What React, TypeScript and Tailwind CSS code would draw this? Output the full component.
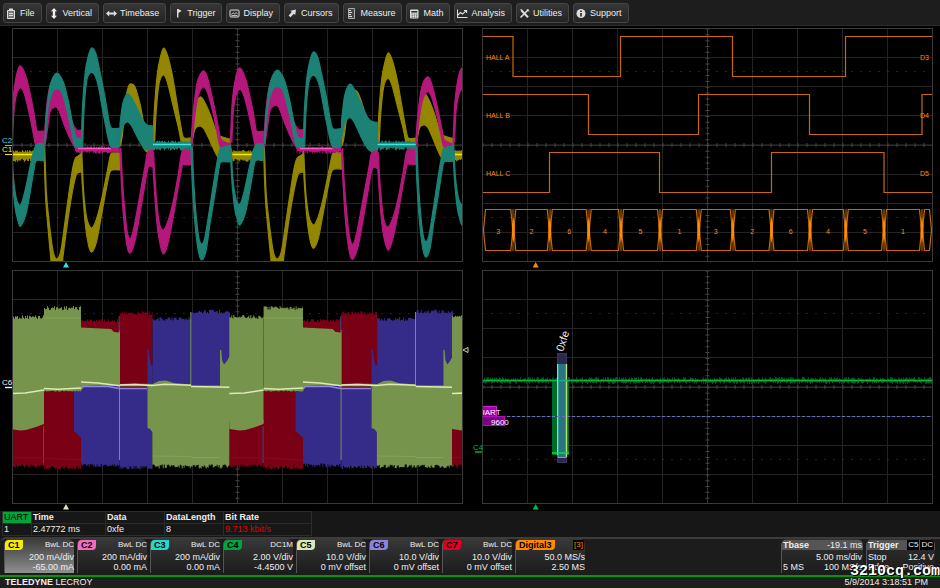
import React from "react";

type Point = [number, number];

type Pulse = {
  color: string;
  outer: Point[];
  inner: Point[];
  // amplitude of the same pulse one motor period later
  next: number;
};

const YELLOW = "#938600";
const MAGENTA = "#b4187b";
const TEAL = "#1c8276";
const GREEN = "#76944b";
const RED = "#7a0016";
const BLUE = "#352c8a";

// commutation edges for every electrical period on screen
const EDGES = [
  [10, 44, 81, 119.7, 152.7, 191, 230.7],
  [229.3, 263.6, 303, 341.3, 377.3, 415.7, 453.7],
  [452, 486, 523, 562, 595, 633, 673],
];

const warp = (x: number, period: number) => {
  const from = EDGES[0];
  const to = EDGES[period];
  let i = 0;
  while (i < from.length - 2 && x > from[i + 1]) i++;
  return to[i] + ((x - from[i]) / (from[i + 1] - from[i])) * (to[i + 1] - to[i]);
};

const curve = (pts: Point[]) => {
  let d = "";
  for (let i = 0; i < pts.length - 1; i++) {
    const a = pts[Math.max(i - 1, 0)];
    const b = pts[i];
    const c = pts[i + 1];
    const e = pts[Math.min(i + 2, pts.length - 1)];
    d +=
      `C${b[0] + (c[0] - a[0]) / 7} ${b[1] + (c[1] - a[1]) / 7} ` +
      `${c[0] - (e[0] - b[0]) / 7} ${c[1] - (e[1] - b[1]) / 7} ${c[0]} ${c[1]}`;
  }
  return d;
};

const band = (pulse: Pulse, period: number) => {
  const k = period === 0 ? 1 : pulse.next;
  const move = ([x, y]: Point): Point => [warp(x, period), 145 + (y - 145) * k];
  const outer = pulse.outer.map(move);
  const inner = pulse.inner.map(move).reverse();
  return `M${outer[0].join(" ")}${curve(outer)}L${inner[0].join(" ")}${curve(inner)}Z`;
};

const noise = (x: number, seed: number) => {
  const v = Math.sin(x * 12.9898 + seed * 78.233) * 43758.5453;
  return v - Math.floor(v);
};

// block with a ragged edge on top and / or bottom
const ragged = (x0: number, x1: number, top: number, bottom: number, up: number, down: number) => {
  let d = `M${x0} ${top}`;
  for (let x = x0; x < x1; x++) {
    const y = top + (noise(x, 1) - 0.5) * up;
    d += `L${x} ${y}L${Math.min(x + 1, x1)} ${y}`;
  }
  for (let x = x1; x > x0; x--) {
    const y = bottom + (noise(x, 2) - 0.5) * down;
    d += `L${x} ${y}L${Math.max(x - 1, x0)} ${y}`;
  }
  return d + "Z";
};

const PULSES: Pulse[] = [
  {
    color: YELLOW,
    next: 1,
    outer: [[44, 144], [44.7, 174], [46, 204], [48.3, 231], [50.7, 257], [52, 264], [61.5, 264], [63.3, 254], [68.3, 217], [73.3, 187], [76.7, 174], [81, 172]],
    inner: [[44.6, 144], [46.3, 191], [48.6, 217], [51.9, 244], [54, 255], [56.5, 259], [59.3, 256], [61.7, 246], [66.7, 209], [71.7, 174], [75, 159], [81, 154]],
  },
  {
    color: YELLOW,
    next: 0.965,
    outer: [[81, 156], [82.3, 184], [85, 221], [88.3, 244], [91.7, 252], [96.7, 241], [101.7, 214], [106.7, 187], [110.7, 171], [119.7, 170]],
    inner: [[81.6, 147], [83.6, 191], [86.9, 219], [91.7, 228], [96.5, 219], [101.7, 199], [106.7, 174], [110, 157], [112, 153], [119.7, 153]],
  },
  {
    color: YELLOW,
    next: 0.9,
    outer: [[120, 134], [123.3, 111], [128.3, 87], [131.7, 84], [135, 87], [140, 104], [143.3, 121], [147, 137], [152.7, 141]],
    inner: [[120.3, 146], [122, 138], [125, 115], [131, 110], [137, 124], [142, 144], [147, 152], [152.7, 152]],
  },
  {
    color: YELLOW,
    next: 0.95,
    outer: [[153, 144], [154.3, 111], [157.3, 74], [160.7, 56], [163.7, 48], [167.7, 56], [172.7, 77], [178.3, 111], [182.3, 134], [184.3, 138], [191, 138]],
    inner: [[154.5, 146], [156, 114], [159, 84], [163.3, 75], [167.3, 82], [172.7, 104], [178.3, 127], [182.7, 146], [191, 146]],
  },
  {
    color: YELLOW,
    next: 1.06,
    outer: [[191.7, 137], [195, 106], [200, 97], [204, 101], [210, 114], [216, 131], [220, 136], [230, 139]],
    inner: [[191.7, 144], [195, 129], [200, 126], [204, 129], [210, 141], [215, 152], [219.3, 158], [220.7, 147], [230, 146]],
  },
  {
    color: MAGENTA,
    next: 0.975,
    outer: [[11, 142], [13, 100], [16.7, 74], [20.7, 66], [26.7, 79], [33.3, 109], [36, 126], [37.3, 131], [44, 131]],
    inner: [[12.5, 142], [14, 111], [16.7, 94], [20.7, 88], [25, 96], [30, 117], [34.3, 139], [36, 145], [44, 145]],
  },
  {
    color: MAGENTA,
    next: 1.04,
    outer: [[44, 144], [46.2, 111], [49.5, 88], [54, 79], [60, 84], [66.7, 99], [71.7, 121], [76.7, 130], [81, 130]],
    inner: [[44.5, 148], [47.3, 131], [50, 112], [54.3, 107], [58.3, 109], [65, 127], [71.7, 142], [76.7, 150], [81, 150]],
  },
  {
    color: MAGENTA,
    next: 1.06,
    outer: [[120, 151], [121.3, 181], [123.3, 214], [126.7, 244], [130, 253], [135, 241], [140, 214], [145, 184], [148.3, 167], [152.7, 167]],
    inner: [[120.9, 148], [122.5, 181], [124.9, 211], [127.3, 232], [130.3, 239], [134, 227], [140, 194], [145, 166], [147.7, 152], [152.7, 150]],
  },
  {
    color: MAGENTA,
    next: 0.965,
    outer: [[152.7, 161], [154, 184], [156.7, 221], [160, 244], [163.7, 254], [168.3, 242], [173.3, 217], [178.3, 187], [182.3, 166], [185, 165], [191, 165]],
    inner: [[153.5, 152], [155.9, 191], [159, 221], [163.3, 230], [168.3, 220], [173.3, 201], [178.3, 174], [182.3, 151], [191, 146]],
  },
  {
    color: MAGENTA,
    next: 0.92,
    outer: [[191, 144], [193.3, 111], [197.3, 82], [203, 71], [207.3, 77], [213.3, 102], [218.3, 127], [220.7, 139], [225, 142], [230, 144]],
    inner: [[192, 144], [195, 114], [198.3, 96], [203, 87], [207.3, 92], [213.3, 114], [218.3, 139], [220.7, 147], [230, 147]],
  },
  {
    color: TEAL,
    next: 0.985,
    outer: [[11, 147], [12.3, 178], [15, 207], [18, 221], [20.7, 226], [26.7, 211], [33.3, 174], [36, 161], [44, 161]],
    inner: [[12, 150], [13.5, 178], [16.7, 200], [20.7, 205], [25, 191], [30, 167], [34.3, 149], [37.3, 144], [44, 144]],
  },
  {
    color: TEAL,
    next: 1.04,
    outer: [[44.7, 141], [46.7, 111], [50.5, 84], [56.7, 73], [63.3, 82], [68.3, 101], [72.7, 124], [76, 137], [81, 139]],
    inner: [[45, 144], [48, 108], [52, 93], [56.7, 89], [61.7, 92], [66.7, 109], [70.7, 127], [74, 144], [76, 147], [81, 147]],
  },
  {
    color: TEAL,
    next: 0.96,
    outer: [[81.3, 147], [82.3, 111], [85, 74], [88.3, 56], [91.7, 48], [96, 54], [100, 72], [105, 97], [108.3, 117], [111.3, 128], [119.7, 128]],
    inner: [[82.7, 147], [84, 111], [86.7, 81], [90, 73], [94, 74], [98.3, 86], [103.3, 114], [108.3, 139], [111.3, 147], [119.7, 147]],
  },
  {
    color: TEAL,
    next: 1.19,
    outer: [[120, 124], [122.7, 104], [127.3, 94], [131.7, 98], [138.3, 111], [143.3, 121], [147.3, 125], [152.7, 126]],
    inner: [[120, 139], [122.7, 127], [127.3, 122], [131.7, 126], [138.3, 139], [145, 149], [152.7, 149]],
  },
  {
    color: TEAL,
    next: 0.975,
    outer: [[191, 147], [192.3, 184], [195, 224], [198.3, 251], [201.7, 260], [206, 251], [210, 224], [215, 194], [219.3, 167], [221.3, 162], [230.7, 162]],
    inner: [[192.3, 147], [194, 187], [196.7, 221], [199.3, 240], [202, 244], [205, 237], [210, 206], [215, 174], [219, 152], [221.3, 148], [230.7, 145]],
  },
];

// quiet phases: the thick noise floor with a bright mean line
const FLATS = [
  { color: YELLOW, light: "#f2ea00", x0: 10, x1: 35, top: 151, bottom: 160.5, mean: 154.5, end: 35 },
  { color: MAGENTA, light: "#f45cc0", x0: 75, x1: 119.7, top: 147, bottom: 152.5, mean: 148.5, end: 111 },
  { color: TEAL, light: "#3fe6da", x0: 150, x1: 191, top: 141.5, bottom: 149, mean: 144.5, end: 191 },
];

const BUS_EDGES = [483, 513.3, 549.8, 588.7, 621, 660, 698.8, 732.8, 771.5, 810, 845.8, 884, 922, 932];
const BUS_VALUES = ["3", "2", "6", "4", "5", "1", "3", "2", "6", "4", "5", "1", ""];

const HALLS = [
  { name: "HALL A", line: "D3", y: 60, d: "M483 36.5H513V76.5H620.5V36.5H732.5V76.5H845.5V36.5H932" },
  { name: "HALL B", line: "D4", y: 118, d: "M483 94.5H588.5V134.5H698.5V94.5H809.5V134.5H922V94.5H932" },
  { name: "HALL C", line: "D5", y: 176, d: "M483 192.5H549.5V152.5H659.5V192.5H771.5V152.5H884V192.5H932" },
];

const MENU = [
  {
    name: "File",
    icon: (
      <>
        <path d="M1.5 2.5h7v8h-7z" fill="#777" stroke="#ddd" />
        <path d="M3 0.5h4v2.5h-4z" fill="#ddd" />
        <path d="M3 5.5h4M3 7.5h4" stroke="#ddd" />
      </>
    ),
  },
  {
    name: "Vertical",
    icon: <path d="M5 0L8 3.2H6.2V7.8H8L5 11L2 7.8H3.8V3.2H2z" fill="#eee" />,
  },
  {
    name: "Timebase",
    icon: <path d="M0 5.5L3.2 2.5V4.5H7.8V2.5L11 5.5L7.8 8.5V6.5H3.2V8.5z" fill="#ddd" />,
  },
  {
    name: "Trigger",
    icon: <path d="M4 1h1.4v0L8.6 3L5.4 5V9.5H4z" fill="#ddd" />,
  },
  {
    name: "Display",
    icon: (
      <>
        <rect x="1" y="2" width="9" height="7" rx="1" fill="#333" stroke="#ddd" />
        <path d="M2.5 6.5L4 4.7L5.5 6L7 4.7L8.5 5.7M2.5 7.5h6" fill="none" stroke="#ddd" strokeWidth="0.8" />
      </>
    ),
  },
  {
    name: "Cursors",
    icon: <path d="M9 1.5L8.2 7L6.8 5.8L3.6 9.2L1.6 7.4L4.8 4.1L3.4 2.8z" fill="#ddd" />,
  },
  {
    name: "Measure",
    icon: (
      <>
        <path d="M2.5 0.5h6v10h-6z" fill="#444" stroke="#aaa" />
        <path d="M3 2.5h2M3 4.5h3M3 6.5h2M3 8.5h3" stroke="#ddd" />
      </>
    ),
  },
  {
    name: "Math",
    icon: (
      <>
        <rect x="1" y="1.5" width="8.5" height="9" rx="1" fill="#ddd" />
        <path d="M2.3 3h6v1.6h-6z" fill="#333" />
        <path d="M2.5 6h6M2.5 7.7h6M2.5 9.3h6" stroke="#555" strokeWidth="0.8" strokeDasharray="1.4 0.8" />
      </>
    ),
  },
  {
    name: "Analysis",
    icon: (
      <path d="M0.5 1.5V9.5H10.5M1 7L3.5 4.5L5.5 6L9 2.8M7 2.5H9.6V5" fill="none" stroke="#ddd" strokeWidth="1.1" />
    ),
  },
  {
    name: "Utilities",
    icon: (
      <>
        <path d="M2.5 2.5L9 9.3" stroke="#ddd" strokeWidth="2" />
        <path d="M9.5 1.5L1.5 9.5" stroke="#ddd" strokeWidth="1.6" />
        <path d="M0.8 1.8L3.4 3.6L3 0.9z" fill="#ddd" />
        <path d="M8.2 1L8.5 2.8L10.3 3" fill="none" stroke="#ddd" />
      </>
    ),
  },
  {
    name: "Support",
    icon: (
      <>
        <circle cx="5" cy="5.5" r="4.5" fill="#ddd" />
        <path d="M4.2 5h1.6v3.4h-1.6zM4.2 2.6h1.6v1.5h-1.6z" fill="#222" />
      </>
    ),
  },
];

const CHANNELS = [
  { name: "C1", badge: "bg-[#f7ec00]", coupling: "BwL DC", scale: "200 mA/div", offset: "-65.00 mA", active: true },
  { name: "C2", badge: "bg-[#f46cc0]", coupling: "BwL DC", scale: "200 mA/div", offset: "0.00 mA" },
  { name: "C3", badge: "bg-[#26d6c8]", coupling: "BwL DC", scale: "200 mA/div", offset: "0.00 mA" },
  { name: "C4", badge: "bg-[#00a33c]", coupling: "DC1M", scale: "2.00 V/div", offset: "-4.4500 V" },
  { name: "C5", badge: "bg-[#d8e8b8]", coupling: "BwL DC", scale: "10.0 V/div", offset: "0 mV offset" },
  { name: "C6", badge: "bg-[#8c84dc]", coupling: "BwL DC", scale: "10.0 V/div", offset: "0 mV offset" },
  { name: "C7", badge: "bg-[#e00024]", coupling: "BwL DC", scale: "10.0 V/div", offset: "0 mV offset" },
  { name: "Digital3", badge: "bg-[#ff8a00]", coupling: "[3]", scale: "50.0 MS/s", offset: "2.50 MS" },
];

function Scope({
  id,
  x,
  y,
  label,
  traces,
  children,
}: {
  id: string;
  x: number;
  y: number;
  label: string;
  traces: React.ReactNode;
  children?: React.ReactNode;
}) {
  const left = x + 12.5;
  const top = y + 2.5;
  const cx = left + 225;
  const cy = top + 116.5;
  return (
    <svg viewBox={`${x} ${y} 470 242`} className="block h-auto w-full" role="img" aria-label={label}>
      <clipPath id={id}>
        <rect x={left} y={top} width="450" height="233" />
      </clipPath>
      <g stroke="#242424">
        {Array.from({ length: 9 }, (_, i) => (
          <path key={i} d={`M${left + 45 * (i + 1)} ${top}v233`} />
        ))}
        {Array.from({ length: 7 }, (_, i) => (
          <path key={i} d={`M${left} ${Math.floor(top + 29.125 * (i + 1)) + 0.5}h450`} />
        ))}
      </g>
      <g stroke="#484848">
        <path d={`M${left} ${top + 43}h450M${left} ${top + 189}h450`} strokeDasharray="1 8" />
        <path d={`M${left} ${cy}h450M${cx} ${top}v233`} stroke="#333" />
        <path d={`M${left} ${cy}h450`} strokeWidth="4" strokeDasharray="1 8" />
        <path d={`M${cx} ${top}v233`} strokeWidth="4" strokeDasharray="1 4.825" />
      </g>
      <g clipPath={`url(#${id})`}>{traces}</g>
      <rect x={left} y={top} width="450" height="233" fill="none" stroke="#3a3a3a" />
      {children}
    </svg>
  );
}

function PhaseCurrents() {
  return (
    <Scope
      id="currents"
      x={0}
      y={26}
      label="Phase currents"
      traces={[YELLOW, MAGENTA, TEAL].map((color) => (
        <g key={color} fill={color}>
          {[0, 1, 2].map((period) => (
            <React.Fragment key={period}>
              {PULSES.filter((el) => el.color === color).map((el, i) => (
                <path key={i} d={band(el, period)} stroke={color} strokeWidth="1.2" />
              ))}
              {FLATS.filter((el) => el.color === color).map((el) => (
                <React.Fragment key={el.light}>
                  <path d={ragged(warp(el.x0, period), warp(el.x1, period), el.top, el.bottom, 2, 3)} />
                  <path
                    d={`M${warp(el.x0 + 3, period)} ${el.mean}H${warp(el.end, period)}`}
                    stroke={el.light}
                    strokeWidth="1.3"
                  />
                </React.Fragment>
              ))}
            </React.Fragment>
          ))}
        </g>
      ))}
    >
      <path d="M66 262l3 5.5h-6z" fill="#2ee6dc" />
      <text x="2" y="143" fontSize="8" fill="#4cd0e0">C2</text>
      <text x="2" y="152" fontSize="8" fill="#fff000">C1</text>
      <path d="M5 145.5h7" stroke="#35d8d8" />
      <path d="M5 154.5h7" stroke="#f2ea00" />
    </Scope>
  );
}

function HallSensors() {
  return (
    <Scope
      id="halls"
      x={470}
      y={26}
      label="Hall sensor signals"
      traces={
        <g fill="none" stroke="#c86a00" strokeWidth="1.2">
          {HALLS.map((el) => (
            <path key={el.name} d={el.d} />
          ))}
          {BUS_VALUES.map((_, i) => {
            const a = BUS_EDGES[i];
            const b = BUS_EDGES[i + 1];
            return (
              <path
                key={i}
                d={`M${a + 0.5} 230L${a + 2.5} 209.5H${b - 2.5}L${b - 0.5} 230L${b - 2.5} 250.5H${a + 2.5}Z`}
              />
            );
          })}
          {BUS_EDGES.slice(1, -1).map((x) => (
            <React.Fragment key={x}>
              <path d={`M${x - 0.6} 209v42M${x + 0.6} 209v42`} strokeWidth="0.6" />
              <path d={`M${x} 217L${x + 1.4} 225V235L${x} 243L${x - 1.4} 235V225Z`} fill="#ff8a00" stroke="none" />
            </React.Fragment>
          ))}
        </g>
      }
    >
      <g fill="#ff8a00" fontSize="7">
        {HALLS.map((el) => (
          <React.Fragment key={el.name}>
            <text x="486" y={el.y}>{el.name}</text>
            <text x="920" y={el.y}>{el.line}</text>
          </React.Fragment>
        ))}
        {BUS_VALUES.map((el, i) => (
          <text key={i} x={(BUS_EDGES[i] + BUS_EDGES[i + 1]) / 2} y="233.5" textAnchor="middle">
            {el}
          </text>
        ))}
      </g>
      <path d="M535.7 262l3 5.5h-6z" fill="#ff8a00" />
    </Scope>
  );
}

function DriveVoltages() {
  return (
    <Scope
      id="voltages"
      x={0}
      y={268}
      label="Drive voltages"
      traces={[0, 1, 2].map((period) => {
        const w = (x: number) => warp(x, period);
        const poly = (pts: Point[]) => pts.map(([x, y]) => `${w(x)},${y}`).join(" ");
        return (
          <g key={period}>
            <g fill={RED}>
              <path d={ragged(w(10), w(44), 420, 466, 0, 4)} />
              <path d={ragged(w(44), w(81), 385, 467.5, 0, 4)} />
              <path d={ragged(w(81), w(119.7), 320.5, 386, 3, 0)} />
              <path d={ragged(w(119.7), w(152.5), 313, 389, 4, 0)} />
            </g>
            <g fill={BLUE}>
              <polygon points={poly([[74, 390], [81, 385], [81, 438], [76.5, 433], [74, 431]])} />
              <path d={ragged(w(81), w(119.7), 385, 465.5, 0, 4)} />
              <path d={ragged(w(119.7), w(152.5), 387.5, 467.5, 0, 4)} />
              <polygon points={poly([[147.5, 386], [147.5, 349], [148.5, 349], [149.5, 358], [151, 366], [152.7, 365], [152.7, 386]])} />
              <path d={ragged(w(152.5), w(191), 319, 387, 4, 0)} />
              <path d={ragged(w(191), w(230), 311.5, 387, 4, 0)} />
            </g>
            <g fill={GREEN}>
              <path d={ragged(w(10), w(44), 317, 422, 4, 0)} />
              <polygon points={poly([[10, 420], [44, 420], [44, 424], [36, 427], [26, 430], [20, 430.5], [10, 429]])} />
              <path d={ragged(w(44), w(81), 308, 391, 4, 1)} />
              <polygon points={poly([[81, 327.5], [111, 329], [114, 332], [119.7, 332.5], [119.7, 386], [96, 385.5], [84, 386], [81, 391]])} />
              <polygon points={poly([[119.7, 384], [135, 383.5], [152.5, 384], [159, 381], [166, 380.5], [174, 383], [191, 384.5], [191, 387], [119.7, 387]])} />
              <polygon points={poly([[147.5, 385], [153, 385], [153, 433], [150, 429], [147.5, 428]])} />
              <path d={ragged(w(152.3), w(230.7), 385.5, 466.5, 0, 4)} />
              <polygon points={poly([[220, 387], [220, 350], [221.3, 350], [222, 360], [224, 364.5], [227, 361], [230.7, 354], [230.7, 387]])} />
              <path d={`M${w(119)} 330h1V460h-1zM${w(190.3)} 312h1V388h-1z`} />
            </g>
            <path d={`M${w(43.5)} 426V463M${w(119.2)} 316V332`} stroke="#4b4690" />
            <path
              d={`M${w(44)} 318H${w(81)}M${w(153)} 456L${w(191)} 456.5M${w(191)} 457.5H${w(220)}`}
              stroke="#86a35a"
            />
            <path d={`M${w(10)} 457.5L${w(44)} 458L${w(81)} 460`} fill="none" stroke="#8a0820" />
            <path
              d={`M${w(81)} 388.5L${w(84)} 386.5H${w(108)}L${w(119)} 388.5H${w(147)}`}
              fill="none"
              stroke="#8f86e2"
              strokeWidth="1.3"
            />
            <path d={`M${w(120)} 386.8H${w(147)}`} stroke={RED} />
            <path
              d={[
                `M${w(10)} 393.5L${w(25)} 393L${w(44)} 390`,
                `M${w(44)} 388.5L${w(58)} 389.3L${w(81)} 388`,
                `M${w(81)} 382L${w(98)} 383L${w(119.7)} 385.8`,
                `M${w(119.7)} 385L${w(135)} 384.5L${w(152)} 385.5L${w(165)} 384.3L${w(191)} 385.3`,
                `M${w(191)} 386.5L${w(230)} 387.2`,
              ].join("")}
              fill="none"
              stroke="#dceab6"
              strokeWidth="1.6"
            />
          </g>
        );
      })}
    >
      <path d="M66 504l3 5.5h-6z" fill="#dceab6" />
      <path d="M468 347.5v5l-5-2.5z" fill="none" stroke="#c8d8a8" />
      <text x="2" y="385" fontSize="8" fill="#f0f0ff">C6</text>
      <path d="M5 387.5h7" stroke="#f0f0ff" strokeWidth="1.4" />
    </Scope>
  );
}

function SerialDecode() {
  return (
    <Scope
      id="serial"
      x={470}
      y={268}
      label="UART decode"
      traces={
        <>
          <path d={ragged(482, 933, 378.5, 382.5, 3, 3)} fill="#00591f" />
          <rect x="552" y="380" width="17" height="75" fill="#006b26" />
          <path d="M482 380.5H933" stroke="#00b840" strokeWidth="1.6" />
          <rect x="557.5" y="353.5" width="9" height="109" fill="#2c2a4c" stroke="#38365c" />
          <rect x="558" y="364" width="9" height="94" fill="#2a7484" />
          <path d="M558 364V457.5H566" fill="none" stroke="#39c0a8" />
          <path d="M566.5 364V457" stroke="#b8e070" strokeWidth="1.4" />
          <path d="M557.5 364V455" stroke="#9adf80" />
          <path d="M552 453H569" stroke="#00e04c" strokeWidth="1.3" />
          <path d="M558 380.5H567" stroke="#18b080" strokeWidth="1.6" />
          <path d="M482 416.5H933" stroke="#6c6cc4" strokeDasharray="3 2" />
          <rect x="480.5" y="406.5" width="16" height="10" fill="#a000a4" stroke="#d020d8" />
          <rect x="480.5" y="416.5" width="24" height="9" fill="#80008a" stroke="#b010b8" />
          <text x="479" y="414.5" fontSize="8" fill="#fff">UART</text>
        </>
      }
    >
      <text x="491" y="424.5" fontSize="8" fill="#fff">9600</text>
      <text fontSize="11" fill="#f0f0f0" transform="translate(563 352) rotate(-72)">0xfe</text>
      <text x="473" y="450" fontSize="8" fill="#00b848">C4</text>
      <path d="M475 452h7" stroke="#00b848" strokeWidth="1.4" />
      <path d="M535.7 504l3 5.5h-6z" fill="#00b848" />
    </Scope>
  );
}

function MenuBar() {
  return (
    <nav className="flex h-[26px] items-start gap-1 overflow-hidden border-b border-[#2c2c2c] bg-[#1d1d1d] pt-[3px] pl-[3px]">
      {MENU.map((el) => (
        <button
          key={el.name}
          className="flex h-5 shrink-0 items-center gap-[3px] rounded-[3px] border border-[#454545] bg-linear-to-b from-[#363636] to-[#242424] pr-[6px] pl-[2px] text-[9px] leading-none text-[#eee]"
        >
          <svg viewBox="0 0 11 11" className="h-[11px] w-[11px]" aria-hidden="true">
            {el.icon}
          </svg>
          {el.name}
        </button>
      ))}
    </nav>
  );
}

function DecodeTable() {
  return (
    <table className="ml-[2px] table-fixed border-collapse border border-[#333] text-left text-[9px] leading-none text-[#eee]">
      <thead>
        <tr className="h-3">
          <th className="w-[29px] bg-[#00a33c] px-px font-normal text-black">UART</th>
          <th className="w-[74px] border border-[#2c2c2c] px-px">Time</th>
          <th className="w-[59px] border border-[#2c2c2c] px-px">Data</th>
          <th className="w-[59px] border border-[#2c2c2c] px-px">DataLength</th>
          <th className="w-[88px] border border-[#2c2c2c] px-px">Bit Rate</th>
        </tr>
      </thead>
      <tbody>
        <tr className="h-3">
          <td className="border border-[#2c2c2c] px-px">1</td>
          <td className="border border-[#2c2c2c] px-px">2.47772 ms</td>
          <td className="border border-[#2c2c2c] px-px">0xfe</td>
          <td className="border border-[#2c2c2c] px-px">8</td>
          <td className="border border-[#2c2c2c] px-px text-[#e00000]">9.713 kbit/s</td>
        </tr>
      </tbody>
    </table>
  );
}

export default function App() {
  return (
    <div className="relative w-full overflow-hidden bg-black font-['Liberation_Sans',Arial,sans-serif] text-[#eee]">
      <MenuBar />
      <main className="grid grid-cols-2">
        <PhaseCurrents />
        <HallSensors />
        <DriveVoltages />
        <SerialDecode />
      </main>
      <footer className="bg-[#171717]">
        <div className="h-[27px] border-t border-black">
          <DecodeTable />
        </div>
        <div className="flex h-[38px] items-start justify-between rounded-tl-md border-t-2 border-[#3c3c3c] bg-[#1c1c1c] pr-[5px] pl-1 text-[9px] leading-[10px]">
          <div className="flex gap-[3px]">
            {CHANNELS.map((el) => (
              <button
                key={el.name}
                className={
                  "w-[70px] h-[34px] rounded-t-md border-l border-[#555] text-right " +
                  (el.active
                    ? "bg-linear-to-b from-[#3c3c3c] to-[#909090]"
                    : "bg-linear-to-b from-[#383838] to-[#1c1c1c]")
                }
              >
                <span className="flex items-start justify-between">
                  <span className={"rounded-tl-sm rounded-br-sm px-[3px] font-bold text-black " + el.badge}>
                    {el.name}
                  </span>
                  <span className={el.coupling === "[3]" ? "mr-px bg-black px-px text-[8px] text-[#ff8a00]" : "text-[8px]"}>
                    {el.coupling}
                  </span>
                </span>
                <span className="block pt-[2px]">{el.scale}</span>
                <span className="block">{el.offset}</span>
              </button>
            ))}
          </div>
          <div className="flex gap-[3px]">
            <button className="h-[34px] w-[82px] overflow-hidden rounded-t-md border-l border-[#555] bg-linear-to-b from-[#303030] to-[#1c1c1c]">
              <span className="flex justify-between bg-[#555] px-px">
                <b>Tbase</b>
                <span>-19.1 ms</span>
              </span>
              <span className="block pt-[2px] pr-px text-right">5.00 ms/div</span>
              <span className="flex justify-between px-px">
                <span>5 MS</span>
                <span>100 MS/s</span>
              </span>
            </button>
            <button className="h-[34px] w-[69px] overflow-hidden rounded-t-md border-l border-[#555] bg-linear-to-b from-[#303030] to-[#1c1c1c]">
              <span className="flex items-center bg-[#555] px-px">
                <b className="mr-auto">Trigger</b>
                <span className="mr-px bg-black px-px text-[8px]">C5</span>
                <span className="bg-black px-px text-[8px]">DC</span>
              </span>
              <span className="flex justify-between px-px pt-[2px]">
                <span>Stop</span>
                <span>12.4 V</span>
              </span>
              <span className="flex justify-between px-px">
                <span>Edge</span>
                <span>Positive</span>
              </span>
            </button>
          </div>
        </div>
        <div className="flex h-[13px] items-center justify-between border-t-2 border-[#009a00] bg-[#1e1e1e] pr-3 pl-[5px] text-[9px] leading-none">
          <span>
            <b>TELEDYNE</b> LECROY
          </span>
          <time>5/9/2014 3:18:51 PM</time>
        </div>
      </footer>
      <span className="absolute right-0 bottom-2 font-['Liberation_Mono',monospace] text-[15px] leading-4 font-bold text-white [text-shadow:1px_1px_0_#000,-1px_0_0_#000]">
        3210cq.com
      </span>
    </div>
  );
}
